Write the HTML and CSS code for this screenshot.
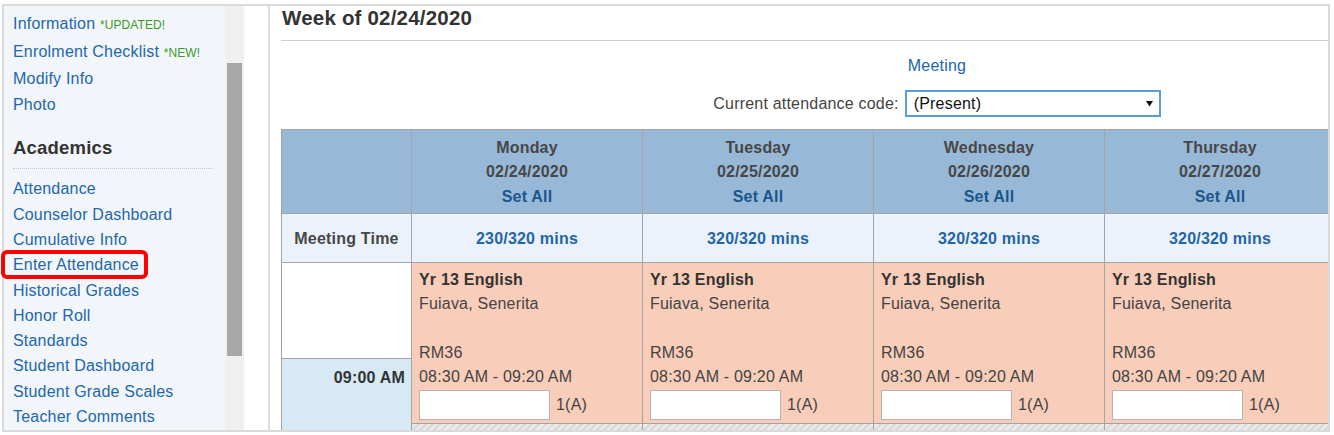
FILE: index.html
```html
<!DOCTYPE html>
<html>
<head>
<meta charset="utf-8">
<title>Enter Attendance</title>
<link rel="stylesheet" href="styles.css">
</head>
<body>
<div class="frame">
  <aside class="sidebar">
    <ul class="nav top">
      <li class="first"><a href="#">Information</a> <span class="badge">*Updated!</span></li>
      <li class="second"><a href="#">Enrolment Checklist</a> <span class="badge">*New!</span></li>
      <li class="third"><a href="#">Modify Info</a></li>
      <li><a href="#">Photo</a></li>
    </ul>
    <h3 class="nav-head">Academics</h3>
    <ul class="nav list">
      <li><a href="#">Attendance</a></li>
      <li><a href="#">Counselor Dashboard</a></li>
      <li><a href="#">Cumulative Info</a></li>
      <li><a href="#" class="marked">Enter Attendance</a></li>
      <li><a href="#">Historical Grades</a></li>
      <li><a href="#">Honor Roll</a></li>
      <li><a href="#">Standards</a></li>
      <li><a href="#">Student Dashboard</a></li>
      <li><a href="#">Student Grade Scales</a></li>
      <li><a href="#">Teacher Comments</a></li>
    </ul>
  </aside>
  <div class="scrollbar"><div class="thumb"></div></div>
  <div class="gutter"></div>
  <main class="main">
    <h2 class="title">Week of 02/24/2020</h2>
    <div class="center">
      <a href="#" class="meeting">Meeting</a>
      <div class="code-row">
        <span class="code-label">Current attendance code:</span>
        <div class="select">
          <span>(Present)</span>
          <svg width="7" height="7" viewBox="0 0 7 7"><path d="M0 1h7L3.5 6.5z" fill="#111"/></svg>
        </div>
      </div>
    </div>
    <table class="week">
      <colgroup>
        <col class="c-time"><col class="c-day"><col class="c-day"><col class="c-day"><col class="c-day">
      </colgroup>
      <tr class="head">
        <th></th>
        <th><div>Monday</div><div>02/24/2020</div><a href="#">Set All</a></th>
        <th><div>Tuesday</div><div>02/25/2020</div><a href="#">Set All</a></th>
        <th><div>Wednesday</div><div>02/26/2020</div><a href="#">Set All</a></th>
        <th><div>Thursday</div><div>02/27/2020</div><a href="#">Set All</a></th>
      </tr>
      <tr class="mt">
        <th>Meeting Time</th>
        <td>230/320 mins</td>
        <td>320/320 mins</td>
        <td>320/320 mins</td>
        <td>320/320 mins</td>
      </tr>
      <tr class="slot-a">
        <td class="blank"></td>
        <td class="cls" rowspan="2">
          <div class="cname">Yr 13 English</div>
          <div>Fuiava, Senerita</div>
          <div class="empty"></div>
          <div>RM36</div>
          <div>08:30 AM - 09:20 AM</div>
          <div class="entry"><input type="text" class="code-input"><span>1(A)</span></div>
        </td>
        <td class="cls" rowspan="2">
          <div class="cname">Yr 13 English</div>
          <div>Fuiava, Senerita</div>
          <div class="empty"></div>
          <div>RM36</div>
          <div>08:30 AM - 09:20 AM</div>
          <div class="entry"><input type="text" class="code-input"><span>1(A)</span></div>
        </td>
        <td class="cls" rowspan="2">
          <div class="cname">Yr 13 English</div>
          <div>Fuiava, Senerita</div>
          <div class="empty"></div>
          <div>RM36</div>
          <div>08:30 AM - 09:20 AM</div>
          <div class="entry"><input type="text" class="code-input"><span>1(A)</span></div>
        </td>
        <td class="cls" rowspan="2">
          <div class="cname">Yr 13 English</div>
          <div>Fuiava, Senerita</div>
          <div class="empty"></div>
          <div>RM36</div>
          <div>08:30 AM - 09:20 AM</div>
          <div class="entry"><input type="text" class="code-input"><span>1(A)</span></div>
        </td>
      </tr>
      <tr class="slot-b">
        <td class="time" rowspan="2">09:00 AM</td>
      </tr>
      <tr class="slot-c">
        <td class="hatch"></td>
        <td class="hatch"></td>
        <td class="hatch"></td>
        <td class="hatch"></td>
      </tr>
    </table>
  </main>
</div>
</body>
</html>
```
FILE: styles.css
```css
* { box-sizing: border-box; }
html, body { margin: 0; padding: 0; background: #fff; }
body {
  font-family: "Liberation Sans", Arial, sans-serif;
  font-size: 16px;
  letter-spacing: 0.2px;
  color: #444;
}
a { color: #2167ab; text-decoration: none; }

.frame {
  display: flex;
  width: 1328px;
  height: 428px;
  margin: 4px 0 0 2px;
  border: 2px solid #dadada;
}

/* sidebar */
.sidebar {
  width: 221px;
  flex: none;
  background: #f2f6fa;
  padding: 4px 0 0 9px;
}
.nav { list-style: none; margin: 0; padding: 0; }
.nav li { line-height: 25.33px; white-space: nowrap; }
.nav.top li { line-height: 25px; }
.nav.top li.first { line-height: 28px; }
.nav.top li.second { line-height: 28px; }
.nav.top li.third { line-height: 26px; }
.nav.list { margin-top: 7.2px; }
.badge {
  color: #3a9a1f;
  font-size: 12px;
  line-height: 1;
  text-transform: uppercase;
  letter-spacing: 0.1px;
}
.nav-head {
  margin: 19px 0 0;
  width: 200px;
  font-size: 18.5px;
  line-height: 24px;
  font-weight: bold;
  color: #333;
  padding-bottom: 8px;
  border-bottom: 1px dotted #c4c4c4;
}
.marked { position: relative; display: inline-block; }
.marked::after {
  content: "";
  position: absolute;
  left: -12px;
  right: -9px;
  top: -2px;
  bottom: -1px;
  border: 4px solid #f00;
  border-radius: 6px;
}

.scrollbar {
  width: 19px;
  flex: none;
  background: #f0f0f0;
  padding: 57px 2px 0 2px;
}
.thumb { height: 293px; background: #a8a8a8; }
.gutter {
  width: 26px;
  flex: none;
  border-right: 2px solid #dcdcdc;
}

/* main */
.main {
  flex: 1;
  min-width: 0;
  overflow: hidden;
  padding-left: 11px;
}
.title {
  margin: 0;
  font-size: 20.5px;
  line-height: 24px;
  font-weight: bold;
  color: #333;
  padding: 0 0 10px 1px;
  border-bottom: 1px solid #cfcfcf;
}
.center { width: 1312px; text-align: center; }
.meeting { display: block; margin-top: 15px; line-height: 20px; }
.code-row {
  display: flex;
  justify-content: center;
  align-items: center;
  gap: 6px;
  margin-top: 14px;
  height: 27px;
}
.code-label { color: #444; }
.select {
  width: 256px;
  height: 27px;
  border: 2px solid #5a9bd8;
  display: flex;
  align-items: center;
  justify-content: space-between;
  padding: 0 6px 0 7px;
  color: #111;
  background: #fff;
}

/* table */
.week {
  margin-top: 12px;
  border-collapse: collapse;
  table-layout: fixed;
  width: 1054px;
}
.c-time { width: 130px; }
.c-day { width: 231px; }
.week th, .week td {
  border: 1px solid #a4a4a4;
  padding: 0;
}
.head th {
  height: 84px;
  background: #97b9d7;
  font-weight: bold;
  color: #474747;
  line-height: 24.5px;
  text-align: center;
  vertical-align: middle;
  padding-top: 2px;
}
.head a { color: #1b568d; }
.mt th, .mt td {
  height: 49px;
  background: #ecf2fc;
  font-weight: bold;
  text-align: center;
  vertical-align: middle;
  padding-top: 2px;
}
.mt th { color: #474747; }
.mt td { color: #1f66a6; }
.slot-a td.blank { height: 96px; background: #fff; }
.slot-b { height: 64px; }
.cls {
  background: #f8cdb9;
  vertical-align: top;
  padding: 5px 7px 3px !important;
  line-height: 24.3px;
  color: #444;
  text-align: left;
}
.cname { font-weight: bold; color: #333; }
.empty { height: 24.3px; }
.entry { display: flex; align-items: center; gap: 6px; margin-top: 0.5px; }
.code-input {
  width: 131px;
  height: 30px;
  margin: 0;
  padding: 0 4px;
  border: 1px solid #b3b3b3;
  background: #fff;
  font: inherit;
}
.time {
  background: #d6e9f4;
  vertical-align: top;
  text-align: right;
  padding: 7px 6px 0 0 !important;
  line-height: 24px;
  font-weight: bold;
  color: #333;
}
.slot-c td.hatch {
  height: 20px;
  background: repeating-linear-gradient(-45deg, #d6d6d6 0 2px, #ebebeb 2px 5px);
}
```
